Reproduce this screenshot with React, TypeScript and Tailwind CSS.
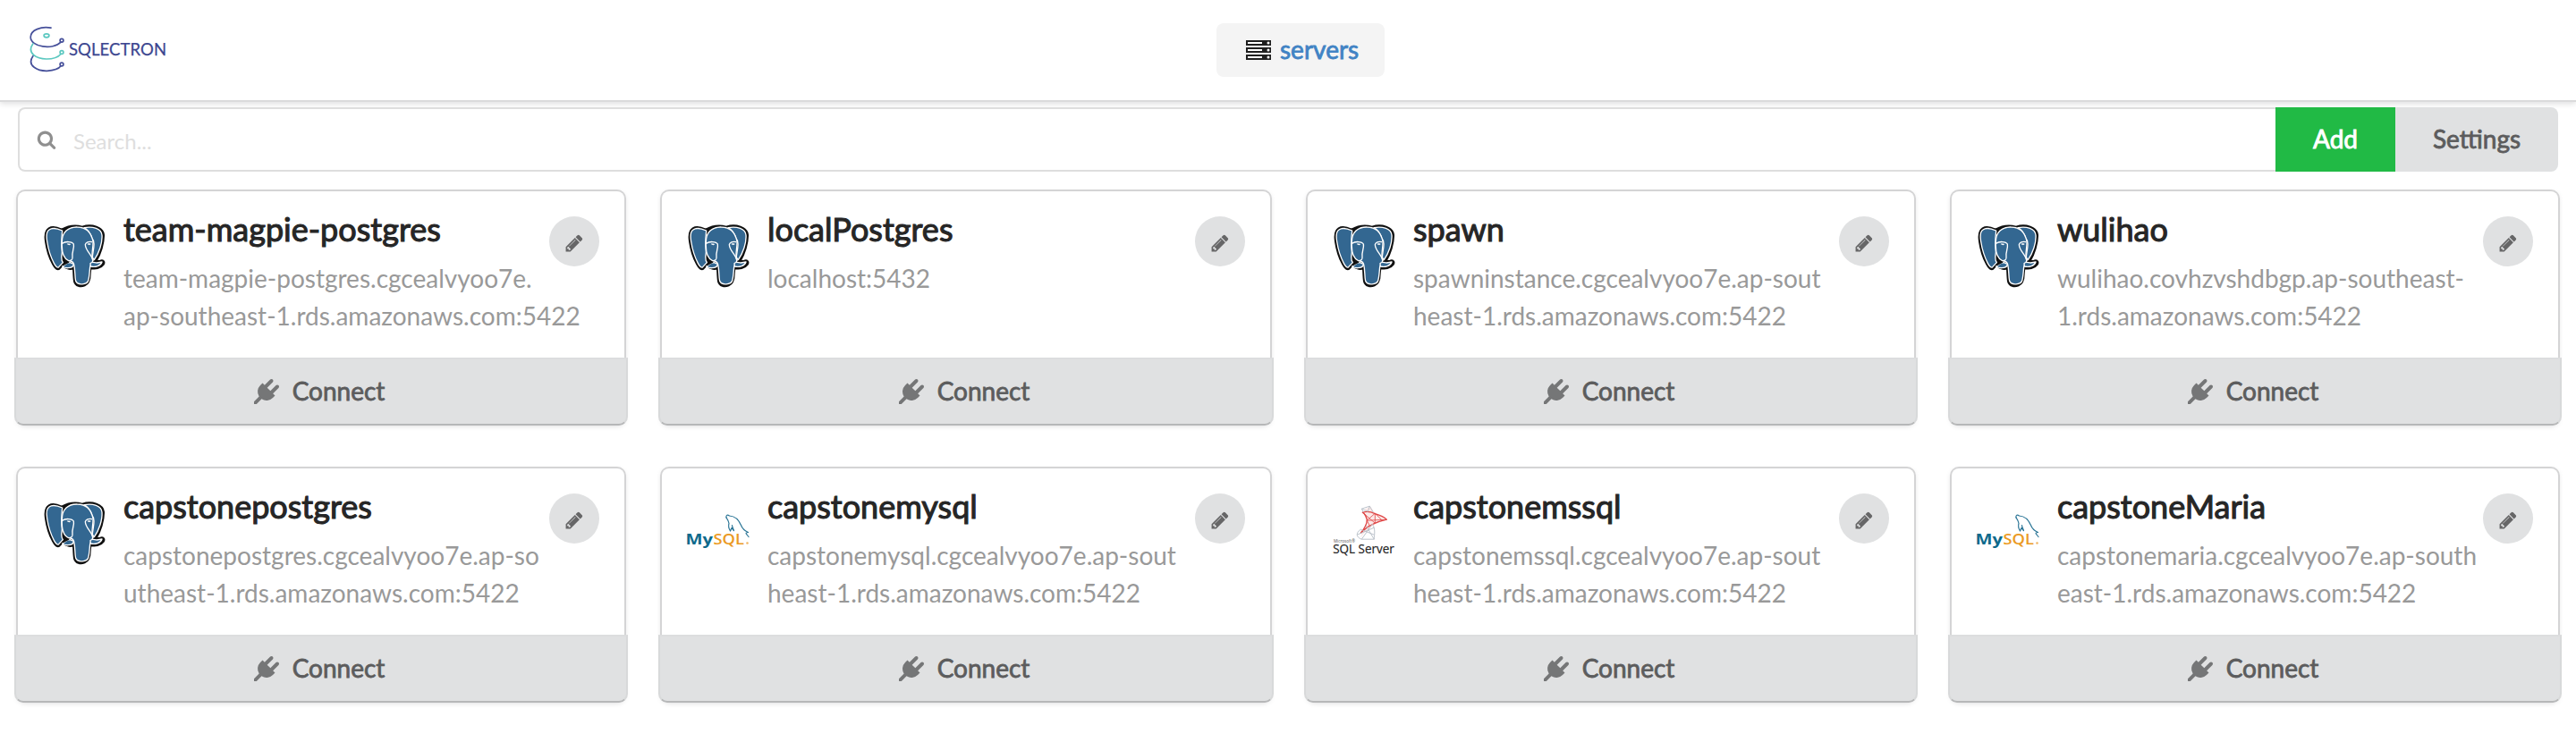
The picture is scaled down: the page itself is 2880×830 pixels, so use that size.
import React from "react";

type Kind = "postgres" | "mysql" | "mssql";
type Server = { name: string; lines: string[]; kind: Kind };

const servers: Server[] = [
  { name: "team-magpie-postgres", lines: ["team-magpie-postgres.cgcealvyoo7e.", "ap-southeast-1.rds.amazonaws.com:5422"], kind: "postgres" },
  { name: "localPostgres", lines: ["localhost:5432"], kind: "postgres" },
  { name: "spawn", lines: ["spawninstance.cgcealvyoo7e.ap-sout", "heast-1.rds.amazonaws.com:5422"], kind: "postgres" },
  { name: "wulihao", lines: ["wulihao.covhzvshdbgp.ap-southeast-", "1.rds.amazonaws.com:5422"], kind: "postgres" },
  { name: "capstonepostgres", lines: ["capstonepostgres.cgcealvyoo7e.ap-so", "utheast-1.rds.amazonaws.com:5422"], kind: "postgres" },
  { name: "capstonemysql", lines: ["capstonemysql.cgcealvyoo7e.ap-sout", "heast-1.rds.amazonaws.com:5422"], kind: "mysql" },
  { name: "capstonemssql", lines: ["capstonemssql.cgcealvyoo7e.ap-sout", "heast-1.rds.amazonaws.com:5422"], kind: "mssql" },
  { name: "capstoneMaria", lines: ["capstonemaria.cgcealvyoo7e.ap-south", "east-1.rds.amazonaws.com:5422"], kind: "mysql" },
];

function Logo() {
  return (
    <svg className="block h-[54px] w-[156px]" viewBox="0 0 156 54" fill="none">
      <g strokeWidth="1.7" strokeLinecap="round">
        <g stroke="#46509a">
          <path d="M25 2.2C14 .2 2.2 4.5 2.2 12.5C2.2 23.5 27 27.5 36 18.2" />
          <circle cx="37" cy="16.2" r="1.9" />
          <path d="M5 33.5C-3 45 11 50.5 20.5 50.3C27 50 33.5 48.5 36 44.8" />
          <circle cx="37" cy="43" r="1.9" />
        </g>
        <g stroke="#5cc8c0">
          <path d="M4.8 20C-2.5 30.5 9 37 20 37C27 37 33 35 36 31.5" />
          <circle cx="37" cy="29.6" r="1.9" />
          <ellipse cx="20" cy="10.8" rx="2.9" ry="2" />
        </g>
      </g>
      <text x="45" y="32.5" fontSize="18.5" textLength="109" lengthAdjust="spacing" fill="#3c4690" stroke="#3c4690" strokeWidth=".25" fontFamily="Lato, sans-serif">SQLECTRON</text>
    </svg>
  );
}

function ServersIcon() {
  return (
    <svg className="block h-[22px] w-7" viewBox="0 0 28 22">
      {[0, 8, 16].map((y) => (
        <g key={y}>
          <rect y={y} width="28" height="6" fill="#1f1f1f" />
          <rect x="2" y={y + 2} width="16" height="2" fill="#fff" />
          <circle cx="25" cy={y + 3} r="1.5" fill="#fff" />
        </g>
      ))}
    </svg>
  );
}

function SearchIcon() {
  return (
    <svg className="block h-[22px] w-[22px]" viewBox="0 0 1792 1792" fill="#8f8f8f">
      <path d="M1216 832q0-185-131.5-316.5t-316.5-131.5-316.5 131.5-131.5 316.5 131.5 316.5 316.5 131.5 316.5-131.5 131.5-316.5zm512 832q0 52-38 90t-90 38q-54 0-90-38l-343-342q-179 124-399 124-143 0-273.5-55.5t-225-150-150-225-55.5-273.5 55.5-273.5 150-225 225-150 273.5-55.5 273.5 55.5 225 150 150 225 55.5 273.5q0 220-124 399l343 343q37 37 37 90z" />
    </svg>
  );
}

function PencilIcon() {
  return (
    <svg className="mt-1 mr-px block h-[22px] w-[22px]" viewBox="0 0 1792 1792" fill="#666667">
      <path d="M491 1536l91-91-235-235-91 91v107h128v128h107zm523-928q0-22-22-22-10 0-17 7l-542 542q-7 7-7 17 0 22 22 22 10 0 17-7l542-542q7-7 7-17zm-54-192l416 416-832 832h-416v-416zm683 96q0 53-37 90l-166 166-416-416 166-165q36-38 90-38 53 0 91 38l235 234q37 39 37 91z" />
    </svg>
  );
}

function PlugIcon() {
  return (
    <svg className="block h-7 w-7" viewBox="0 0 1792 1792" fill="#757677">
      <path d="M1755 453q37 38 37 90.5t-37 90.5l-401 400 150 150-160 160q-163 163-389.5 186.5t-411.5-100.5l-362 362h-181v-181l362-362q-124-185-100.5-411.5t186.5-389.5l160-160 150 150 400-401q38-37 91-37t90 37 37 90.5-37 90.5l-400 401 234 234 401-400q38-37 91-37t90 37z" />
    </svg>
  );
}

function PostgresLogo() {
  const head =
    "M117 52C100 44 84 42 74 48C62 55 60 72 63 92C67 120 76 148 87 168C94 182 103 189 109 184L122 170C128 184 144 187 156 183C157 197 157 214 159 226C163 242 180 246 194 240C208 234 212 218 212 203L214 182C228 186 248 183 257 170C263 160 256 154 246 157L232 159C247 136 259 96 258 70C256 45 218 32 186 43C160 36 138 40 117 52Z";
  return (
    <svg className="block h-[72px] w-[70px]" viewBox="54 32 210 216" strokeLinecap="round" strokeLinejoin="round">
      <path d={head} fill="#111" stroke="#111" strokeWidth="6" />
      <path
        d="M119 56C101 48 84 46 75 53C66 59 65 75 68 92C72 119 81 146 91 165C97 177 103 182 107 178L121 163C113 154 117 142 118 128C116 110 116 82 119 56Z"
        fill="#336791" stroke="#fff" strokeWidth="4"
      />
      <path
        d="M192 46C222 40 250 50 252 71C254 96 242 132 226 154C223 151 221 148 220 144C222 120 232 96 217 78C212 62 203 52 192 46Z"
        fill="#336791" stroke="#fff" strokeWidth="4"
      />
      <path
        d="M118 96C117 60 140 43 169 44C198 44 216 62 222 92C223 114 216 134 220 152C225 160 214 166 212 178C210 196 210 210 206 224C202 237 170 241 164 225C160 206 163 190 158 170C156 157 146 158 140 157C124 150 116 132 118 96Z"
        fill="#336791" stroke="#fff" strokeWidth="4"
      />
      <path d="M118 99C130 91 152 92 157 101C160 116 150 128 153 144C154 158 146 156 140 157" fill="none" stroke="#fff" strokeWidth="4" />
      <path d="M218 94C208 91 197 96 196 103C197 123 218 137 222 157" fill="none" stroke="#fff" strokeWidth="4" />
      <path d="M137 101Q142 99 146 102Q142 106 137 101Z M205 101Q210 98 214 101Q209 105 205 101Z" fill="#fff" stroke="#fff" strokeWidth="2" />
      <path d="M119 176C130 169 133 163 145 163L157 168C156 177 147 181 138 181C130 182 124 179 119 176Z" fill="#336791" stroke="#fff" strokeWidth="4" />
      <path d="M122 171L139 162" stroke="#111" strokeWidth="5" />
      <path d="M213 166C218 159 224 163 235 164L252 161C248 174 230 180 214 176Z" fill="#336791" stroke="#fff" strokeWidth="4" />
    </svg>
  );
}

function MysqlLogo() {
  return (
    <svg className="block h-[72px] w-[72px] overflow-visible" viewBox="0 0 72 72" fill="none">
      <g stroke="#2b7596" strokeWidth="1.2" strokeLinecap="round" strokeLinejoin="round">
        <path d="M44 18.8C43.5 15.8 45.5 15.5 47.5 17C54.5 17.5 58 21.5 60.5 27.5C62 31.5 65 34 68.5 35.5C65.5 36 65.5 36.5 67 38L69 40.5" />
        <path d="M44 18.8C45.5 21 46.5 22.5 47 25.5C46 28.5 47 31.5 48.5 34L50 30.5L52.5 33.5C51.5 30.5 50.5 29.5 50.5 27.5" />
      </g>
      <text x="-1.5" y="49" fontSize="15.5" fontWeight="700" textLength="30.5" lengthAdjust="spacingAndGlyphs" fill="#0f6a8c" fontFamily="Open Sans, sans-serif">My</text>
      <text x="29.4" y="49" fontSize="15.5" fontWeight="600" textLength="34.5" lengthAdjust="spacingAndGlyphs" fill="#eb9a23" fontFamily="Open Sans, sans-serif">SQL</text>
      <circle cx="67.5" cy="47.5" r="1.3" fill="#f0b565" />
    </svg>
  );
}

function MssqlLogo() {
  return (
    <svg className="block h-[72px] w-[72px] overflow-visible" viewBox="0 0 72 72" fill="none">
      <g transform="translate(.3 2.2)">
        <path d="M36 7L42 4.5L47 12L59 19C52 22 44 24 35 34L30 40L37 26Z" fill="#fbe9e8" />
        <g stroke="#df4545" strokeLinejoin="round">
          <path strokeWidth="1.3" d="M33 11C40 9 44 11 47 12.5C52 14 57 16 60 19C51 21 40 24 31 34C36 28 38 24 38 19C37 15 35 12 33 11Z" />
          <path strokeWidth=".8" d="M33 11L47 23L47 12L38 20L60 19M38 20L41 26M47 12L55 20" />
        </g>
        <g stroke="#b4bcc5" strokeWidth=".9" strokeLinejoin="round">
          <path d="M32 7L41 4L45 11M32 7L39 10L41 4M32 7L34 11" />
          <path d="M44 24C48 30 46 36 46 41M31 30C25 34 26 39 32 41L46 41M31 30L46 36M44 24L32 41M27 36L46 28M37 26L46 41" />
        </g>
      </g>
      <text fontFamily="Open Sans, sans-serif">
        <tspan x="1" y="47" fontSize="5.5" textLength="24" lengthAdjust="spacingAndGlyphs" fill="#555">Microsoft®</tspan>
        <tspan x=".2" y="59" fontSize="15" textLength="68.5" lengthAdjust="spacingAndGlyphs" fill="#222" stroke="#222" strokeWidth=".2">SQL Server</tspan>
      </text>
    </svg>
  );
}

const logos: Record<Kind, () => React.ReactElement> = { postgres: PostgresLogo, mysql: MysqlLogo, mssql: MssqlLogo };

function ServerCard({ server }: { server: Server }) {
  const DbLogo = logos[server.kind];
  return (
    <article className="flex h-[260px] flex-col rounded-lg bg-white shadow-[0_0_0_2px_#d4d4d5,0_2px_6px_0_#d4d4d5]">
      <div className="flex h-[186px] shrink-0 pt-7 pl-7">
        <div className="w-[90px] shrink-0 pt-[8px]">
          <DbLogo />
        </div>
        <div className="min-w-0 flex-1">
          <h2 className="-mt-1 h-9 text-[36px] leading-[36px] font-normal whitespace-nowrap text-[#262626] [-webkit-text-stroke:1.1px_#262626]">{server.name}</h2>
          <div className="mt-4 text-[28px] leading-[42px] whitespace-nowrap text-[#999]">
            {server.lines.map((line) => (
              <p key={line}>{line}</p>
            ))}
          </div>
        </div>
        <button className="mr-7 -ml-14 flex h-14 w-14 shrink-0 items-center justify-center rounded-full bg-[#e0e1e2]">
          <PencilIcon />
        </button>
      </div>
      <button className="-mx-1 flex h-[76px] shrink-0 items-center justify-center gap-[15px] rounded-b-[10px] border-2 border-t-[#dcddde] border-r-[#d8d9da] border-b-[#b6b7b8] border-l-[#d8d9da] bg-[#e0e1e2] pr-1 text-[28px] leading-7 text-[#5c5c5d] [-webkit-text-stroke:0.8px_#5c5c5d]">
        <PlugIcon />
        <span className="pb-[2px]">Connect</span>
      </button>
    </article>
  );
}

export default function App() {
  return (
    <div className="h-[830px] w-[2880px] overflow-hidden bg-white font-['Lato',sans-serif]">
      <header className="grid h-[114px] grid-cols-[1360px_188px_1fr] items-center border-b-2 border-[#dadadb] shadow-[0_2px_6px_0_rgba(34,36,38,0.15)]">
        <div className="pl-8">
          <Logo />
        </div>
        <a className="flex h-[60px] items-center gap-[10px] rounded-lg bg-[#f4f4f4] pl-[33px] text-[28px] leading-7 text-[#4183c4] [-webkit-text-stroke:0.8px_#4183c4]">
          <ServersIcon />
          <span className="pb-[2px]">servers</span>
        </a>
      </header>
      <main className="px-5 pt-[6px]">
        <div className="flex h-[72px]">
          <label className="flex flex-1 items-center rounded-l-lg border-2 border-r-0 border-[#dedede] pl-[19px] text-[24px] text-[#dedede]">
            <SearchIcon />
            <span className="pt-[3px] pl-[19px]">Search...</span>
          </label>
          <button className="w-[134px] bg-[#21ba45] pb-[2px] text-[28px] text-white [-webkit-text-stroke:0.9px_#fff]">Add</button>
          <button className="w-[182px] rounded-r-lg bg-[#e0e1e2] pb-[2px] text-[28px] text-[#5c5c5d] [-webkit-text-stroke:0.8px_#5c5c5d]">Settings</button>
        </div>
        <section className="mt-[22px] grid grid-cols-[678px_680px_678px_678px] gap-x-[42px] gap-y-[50px]">
          {servers.map((server) => (
            <ServerCard key={server.name} server={server} />
          ))}
        </section>
      </main>
    </div>
  );
}
